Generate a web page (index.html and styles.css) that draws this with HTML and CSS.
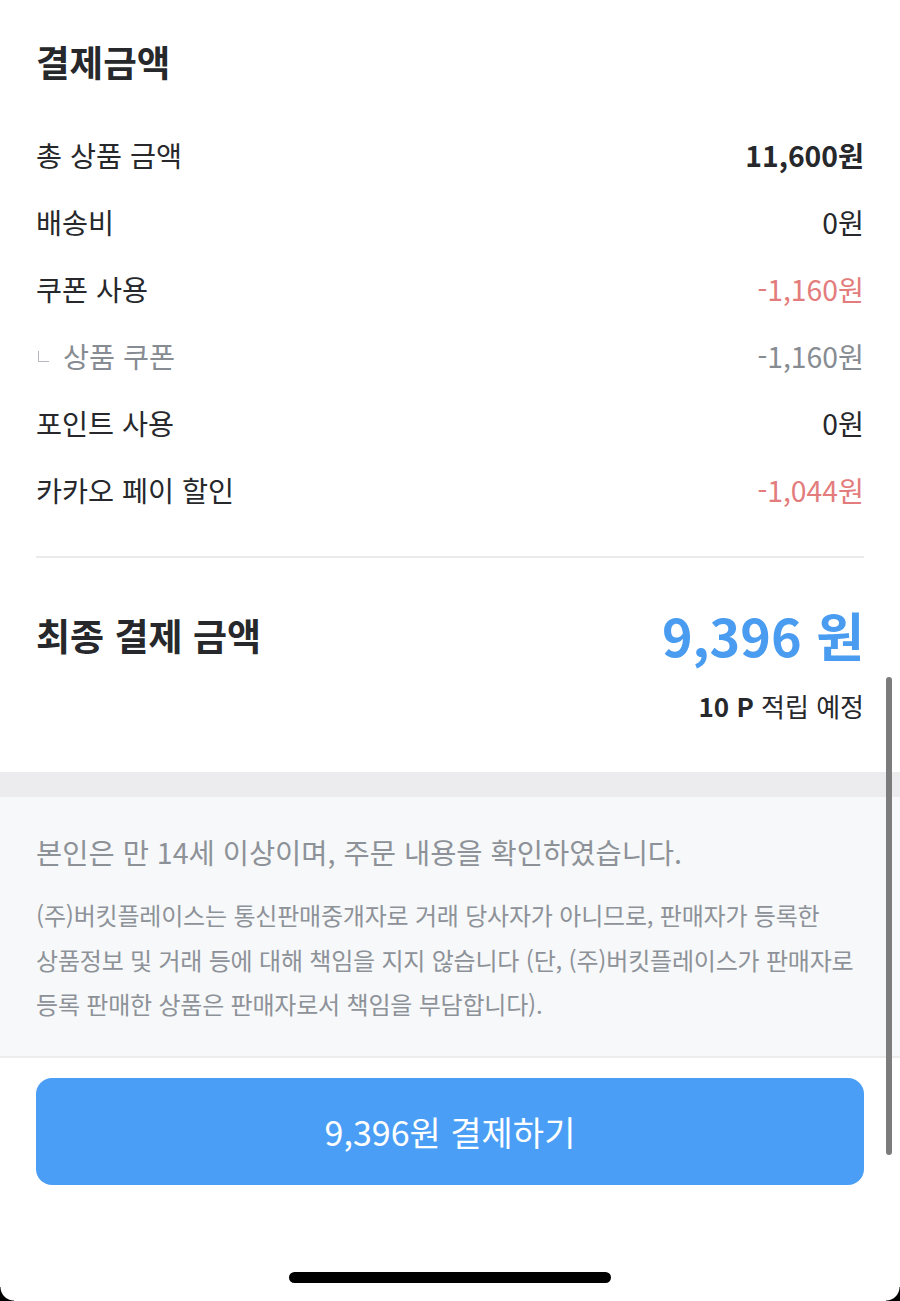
FILE: index.html
```html
<!DOCTYPE html>
<html lang="ko">
<head>
    <meta charset="UTF-8">
    <meta name="viewport" content="width=device-width, initial-scale=1.0">
    <title>결제금액</title>
    <link rel="stylesheet" href="styles.css">
</head>
<body>
<div class="screen">
    <div class="summary">
        <h2 class="title">결제금액</h2>

        <div class="rows">
            <div class="row">
                <span>총 상품 금액</span>
                <span class="strong">11,600원</span>
            </div>
            <div class="row">
                <span>배송비</span>
                <span>0원</span>
            </div>
            <div class="row">
                <span>쿠폰 사용</span>
                <span class="minus">-1,160원</span>
            </div>
            <div class="row sub">
                <span><span class="corner"></span>상품 쿠폰</span>
                <span>-1,160원</span>
            </div>
            <div class="row">
                <span>포인트 사용</span>
                <span>0원</span>
            </div>
            <div class="row">
                <span>카카오 페이 할인</span>
                <span class="minus">-1,044원</span>
            </div>
        </div>

        <div class="total">
            <span class="total-label">최종 결제 금액</span>
            <span class="total-price">9,396 원</span>
        </div>
        <div class="point"><b>10 P</b> 적립 예정</div>
    </div>

    <div class="gap"></div>

    <div class="notice">
        <p class="agree">본인은 만 14세 이상이며, 주문 내용을 확인하였습니다.</p>
        <p class="legal">(주)버킷플레이스는 통신판매중개자로 거래 당사자가 아니므로, 판매자가 등록한<br>상품정보 및 거래 등에 대해 책임을 지지 않습니다 (단, (주)버킷플레이스가 판매자로<br>등록 판매한 상품은 판매자로서 책임을 부담합니다).</p>
    </div>

    <div class="footer">
        <button class="pay">9,396원 결제하기</button>
        <div class="home-bar"></div>
    </div>

    <div class="scrollbar"></div>
    <div class="corner-bl"></div>
    <div class="corner-br"></div>
</div>
</body>
</html>
```

FILE: styles.css
```css
* {
    box-sizing: border-box;
}
body {
    margin: 0;
    padding: 0;
    background: #fff;
    font-family: "Noto Sans CJK KR", "Noto Sans", sans-serif;
    color: #26282b;
}
.screen {
    position: relative;
    width: 900px;
    height: 1301px;
    overflow: hidden;
    display: flex;
    flex-direction: column;
}
.screen > div {
    flex-shrink: 0;
}
.summary {
    padding: 0 36px;
}
.title {
    margin: 0;
    padding-top: 37px;
    font-size: 36.5px;
    line-height: 50px;
    font-weight: 700;
}
.rows {
    margin-top: 34px;
    padding-bottom: 33px;
    border-bottom: 2px solid #eaebec;
}
.row {
    display: flex;
    justify-content: space-between;
    align-items: center;
    height: 67px;
    font-size: 28.3px;
}
.row .strong {
    font-weight: 700;
}
.row .minus {
    color: #e37c7c;
}
.row.sub {
    color: #878c92;
}
.corner {
    display: inline-block;
    width: 11px;
    height: 11px;
    margin: 0 14px 6px 2px;
    border-left: 1.5px solid #b5b9be;
    border-bottom: 1.5px solid #b5b9be;
}
.total {
    display: flex;
    justify-content: space-between;
    align-items: center;
    margin-top: 47px;
    height: 60px;
    line-height: 60px;
}
.total-label {
    font-size: 37px;
    font-weight: 700;
}
.total-price {
    font-size: 52px;
    font-weight: 700;
    color: #4a9cf0;
}
.point {
    text-align: right;
    font-size: 26px;
    line-height: 34px;
    margin-top: 24px;
}
.point b {
    font-weight: 700;
}
.gap {
    margin-top: 49px;
    height: 25px;
    background: #ececee;
}
.notice {
    background: #f7f8fa;
    padding: 35px 36px 29px;
    border-bottom: 2px solid #ebecee;
    color: #8d9298;
}
.agree {
    margin: 0;
    font-size: 28.5px;
    line-height: 40px;
}
.legal {
    margin: 21px 0 0;
    font-size: 24px;
    line-height: 44.5px;
    letter-spacing: -0.2px;
    white-space: nowrap;
}
.footer {
    padding: 20px 36px 0;
    display: flex;
    flex-direction: column;
    align-items: center;
}
.pay {
    width: 100%;
    height: 107px;
    border: none;
    border-radius: 16px;
    background: #4a9ef5;
    color: #fff;
    font-family: inherit;
    font-size: 34px;
    cursor: pointer;
}
.home-bar {
    margin-top: 87px;
    width: 322px;
    height: 11px;
    border-radius: 6px;
    background: #000;
}
.scrollbar {
    position: absolute;
    left: 886px;
    top: 677px;
    width: 6px;
    height: 478px;
    border-radius: 3px;
    background: #7c7c7c;
}
.corner-bl,
.corner-br {
    position: absolute;
    bottom: 0;
    width: 14px;
    height: 14px;
    background: radial-gradient(circle at 100% 0, transparent 13px, #000 14px);
}
.corner-bl {
    left: 0;
}
.corner-br {
    right: 0;
    background: radial-gradient(circle at 0 0, transparent 13px, #000 14px);
}
```
